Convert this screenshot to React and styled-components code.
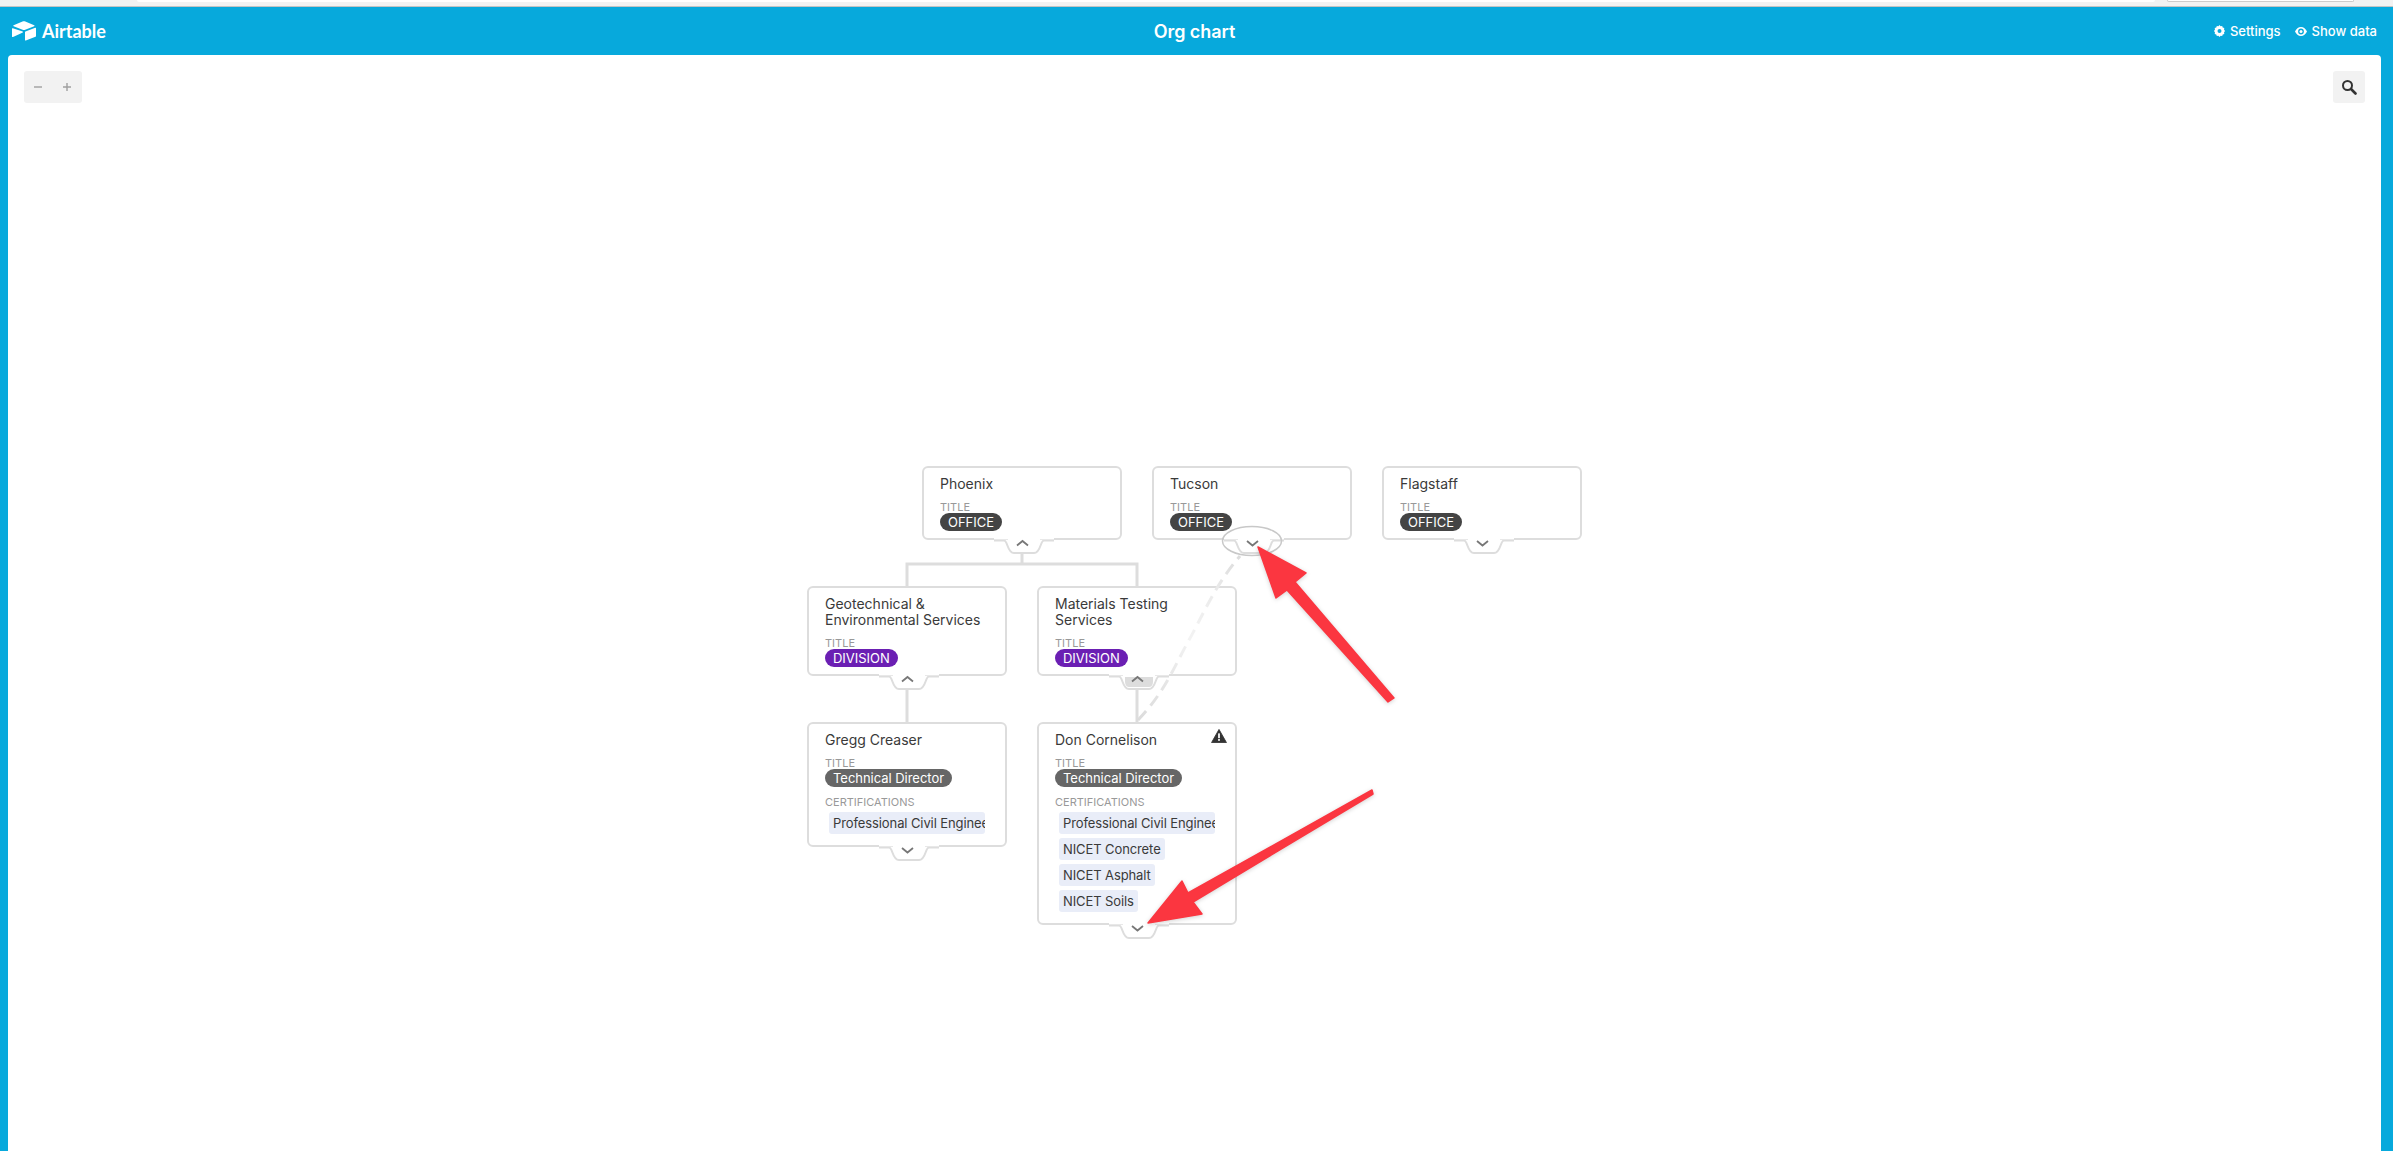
import React from "react";
import styled, { createGlobalStyle } from "styled-components";

const GlobalStyle = createGlobalStyle`
  html, body {
    margin: 0;
    padding: 0;
    height: 100%;
    background: #fff;
    font-family: Inter, "Liberation Sans", sans-serif;
    overflow: hidden;
  }
  #root { height: 100%; }
`;

const Page = styled.div`
  height: 1151px;
  display: flex;
  flex-direction: column;
  background: #07a9dc;
  overflow: hidden;
`;

const BrowserStrip = styled.div`
  flex: 0 0 7px;
  box-sizing: border-box;
  display: flex;
  background: #f2f2f2;
  border-bottom: 1px solid #c4c4c4;
`;

const StripTab = styled.div`
  margin-left: 137px;
  width: 2018px;
  height: 2px;
  background: #fff;
  border-radius: 0 0 4px 4px;
`;

const StripInput = styled.div`
  margin-left: 12px;
  width: 185px;
  height: 1px;
  background: #fff;
  border: 1px solid #ccc;
  border-top: 0;
  border-radius: 0 0 4px 4px;
`;

const Header = styled.header`
  flex: 0 0 48px;
  display: grid;
  grid-template-columns: 1fr auto 1fr;
  align-items: center;
  padding: 0 16px 0 12px;
  color: #fff;
`;

const Brand = styled.div`
  display: flex;
  align-items: center;
  gap: 6px;
  font-family: Lato, Inter, sans-serif;
  font-size: 18px;
  font-weight: 700;
`;

const HeaderTitle = styled.h1`
  margin: 0;
  font-size: 18px;
  font-weight: 600;
  letter-spacing: -0.05px;
`;

const HeaderActions = styled.div`
  display: flex;
  justify-content: flex-end;
  gap: 14px;
`;

const HeaderAction = styled.span`
  display: flex;
  align-items: center;
  gap: 5px;
  font-size: 13px;
  font-weight: 500;
`;

const Canvas = styled.main`
  position: relative;
  flex: 1;
  margin: 0 12px 0 8px;
  background: #fff;
  border-radius: 4px 4px 0 0;
`;

const ZoomControls = styled.div`
  position: absolute;
  left: 16px;
  top: 16px;
  width: 58px;
  height: 32px;
  display: flex;
  align-items: center;
  justify-content: space-around;
  padding-right: 1px;
  box-sizing: border-box;
  background: #f2f2f2;
  border-radius: 3px;
  color: #a0a0a0;
`;

const SearchButton = styled.div`
  position: absolute;
  right: 16px;
  top: 16px;
  width: 32px;
  height: 32px;
  display: flex;
  align-items: center;
  justify-content: center;
  background: #f2f2f2;
  border-radius: 3px;
`;

const Overlay = styled.svg`
  position: absolute;
  left: -8px;
  top: -55px;
  width: 2393px;
  height: 1151px;
  pointer-events: none;
  z-index: ${(p) => p.$z};
  overflow: visible;
`;

const NodeCard = styled.article`
  position: absolute;
  left: ${(p) => p.$x - 8}px;
  top: ${(p) => p.$y - 55}px;
  width: 200px;
  box-sizing: border-box;
  padding: 8px 18px 7px 16px;
  background: #fff;
  border: 2px solid #ddd;
  border-radius: 6px;
  z-index: 1;
`;

const NodeName = styled.div`
  font-size: 14px;
  line-height: 16px;
  color: #3a3a3a;
  white-space: pre-line;
`;

const FieldLabel = styled.div`
  margin-top: 9px;
  font-size: 11px;
  line-height: 12px;
  color: #999;
  text-transform: uppercase;
`;

const Pill = styled.div`
  width: fit-content;
  height: 18px;
  padding: 0 8px;
  border-radius: 9px;
  background: ${(p) => p.$color};
  color: #fff;
  font-size: 13px;
  line-height: 18px;
  letter-spacing: -0.03px;
  white-space: nowrap;
`;

const TagList = styled.div`
  margin-top: 4px;
  display: flex;
  flex-direction: column;
  align-items: flex-start;
  gap: 4px;
  padding: 0 0 4px 4px;
`;

const Tag = styled.span`
  max-width: 156px;
  box-sizing: border-box;
  height: 22px;
  padding: 0 4px;
  overflow: hidden;
  border-radius: 3px;
  background: #e9edf8;
  color: #3a3a3a;
  font-size: 13px;
  line-height: 22px;
  letter-spacing: -0.1px;
  white-space: nowrap;
`;

const Warning = styled.svg`
  position: absolute;
  right: 8px;
  top: 5px;
`;

const Toggle = styled.svg`
  position: absolute;
  left: 70px;
  bottom: -18px;
  z-index: 2;
`;

const Arrows = styled(Overlay)`
  filter: drop-shadow(0 1px 2px rgba(0, 0, 0, 0.18));
`;

const nodes = [
  { name: "Phoenix", x: 922, y: 466, title: "OFFICE", color: "#444444", dir: "up" },
  { name: "Tucson", x: 1152, y: 466, title: "OFFICE", color: "#444444", dir: "down" },
  { name: "Flagstaff", x: 1382, y: 466, title: "OFFICE", color: "#444444", dir: "down" },
  { name: "Geotechnical &\nEnvironmental Services", x: 807, y: 586, title: "DIVISION", color: "#6b1fb3", dir: "up" },
  { name: "Materials Testing\nServices", x: 1037, y: 586, title: "DIVISION", color: "#6b1fb3", dir: "up", active: true },
  {
    name: "Gregg Creaser",
    x: 807,
    y: 722,
    title: "Technical Director",
    color: "#666666",
    dir: "down",
    certs: ["Professional Civil Engineer"],
  },
  {
    name: "Don Cornelison",
    x: 1037,
    y: 722,
    title: "Technical Director",
    color: "#666666",
    dir: "down",
    warn: true,
    certs: ["Professional Civil Engineer", "NICET Concrete", "NICET Asphalt", "NICET Soils"],
  },
];

function ToggleTab({ dir, active }) {
  return (
    <Toggle width="60" height="18" viewBox="0 0 60 18" fill="none">
      <path d="M0 2.5H10C14 2.5 13 15 20 15H40C47 15 46 2.5 50 2.5H60" fill="#fff" stroke="#ddd" strokeWidth="2" />
      <rect x="0" y="0" width="60" height="2" fill="#fff" />
      <path d="M0 1.5H14M46 1.5H60" stroke="#e8e8e8" strokeWidth="1" />
      {active && <path d="M16 3H44V8C44 11 42 13 40 13H20C18 13 16 11 16 8Z" fill="#ddd" />}
      <path
        d={dir === "up" ? "M23 7.5L28.5 3L34 7.5" : "M23 3L28.5 7.5L34 3"}
        stroke="#777"
        strokeWidth="1.8"
        fill="none"
      />
    </Toggle>
  );
}

function Node({ node }) {
  return (
    <NodeCard $x={node.x} $y={node.y}>
      <NodeName>{node.name}</NodeName>
      {node.warn && (
        <Warning width="16" height="14" viewBox="0 0 18 16">
          <path d="M9 0.5L17.5 15.5H0.5Z" fill="#333" stroke="#333" strokeLinejoin="round" />
          <rect x="8" y="5" width="2" height="5.5" fill="#fff" />
          <rect x="8" y="11.5" width="2" height="2" fill="#fff" />
        </Warning>
      )}
      <FieldLabel>Title</FieldLabel>
      <Pill $color={node.color}>{node.title}</Pill>
      {node.certs && (
        <>
          <FieldLabel>Certifications</FieldLabel>
          <TagList>
            {node.certs.map((c) => (
              <Tag key={c}>{c}</Tag>
            ))}
          </TagList>
        </>
      )}
      <ToggleTab dir={node.dir} active={node.active} />
    </NodeCard>
  );
}

export default function App() {
  return (
    <Page>
      <GlobalStyle />
      <BrowserStrip>
        <StripTab />
        <StripInput />
      </BrowserStrip>
      <Header>
        <Brand>
          <svg width="24" height="20" viewBox="0 0 24 20">
            <path d="M10.5 0.6L1.6 4.2C1.1 4.4 1.1 5 1.6 5.2L10.6 8.7C11.4 9 12.4 9 13.2 8.7L22.2 5.2C22.7 5 22.7 4.4 22.2 4.2L13.3 0.6C12.4 0.2 11.4 0.2 10.5 0.6Z" fill="#fff" />
            <path d="M13 11V19C13 19.4 13.4 19.7 13.8 19.5L23.5 15.8C23.8 15.7 24 15.4 24 15.1V7.2C24 6.8 23.6 6.5 23.2 6.7L13.5 10.4C13.2 10.5 13 10.7 13 11Z" fill="#fff" />
            <path d="M10.8 11.4L7.6 13L1 16C0.5 16.2 0 15.9 0 15.4V7.6C0 7.3 0.4 7 0.8 7.2L10.7 10.6C11.1 10.8 11.1 11.2 10.8 11.4Z" fill="#fff" />
          </svg>
          Airtable
        </Brand>
        <HeaderTitle>Org chart</HeaderTitle>
        <HeaderActions>
          <HeaderAction>
            <svg width="11" height="12" viewBox="0 0 11 12">
              <path fillRule="evenodd" d="M5.5 0L6.6 1.2L8.2 0.9L8.7 2.5L10.3 3L10 4.6L11 6L10 7.4L10.3 9L8.7 9.5L8.2 11.1L6.6 10.8L5.5 12L4.4 10.8L2.8 11.1L2.3 9.5L0.7 9L1 7.4L0 6L1 4.6L0.7 3L2.3 2.5L2.8 0.9L4.4 1.2ZM5.5 4A2 2 0 1 0 5.5 8A2 2 0 1 0 5.5 4Z" fill="#fff" />
            </svg>
            Settings
          </HeaderAction>
          <HeaderAction>
            <svg width="12" height="9" viewBox="0 0 12 9">
              <path fillRule="evenodd" d="M6 0C3.4 0 1.2 1.8 0 4.5C1.2 7.2 3.4 9 6 9C8.6 9 10.8 7.2 12 4.5C10.8 1.8 8.6 0 6 0ZM6 1.6A2.9 2.9 0 1 1 6 7.4A2.9 2.9 0 1 1 6 1.6Z" fill="#fff" />
              <circle cx="6" cy="4.5" r="1.5" fill="#fff" />
            </svg>
            Show data
          </HeaderAction>
        </HeaderActions>
      </Header>
      <Canvas>
        <ZoomControls>
          <svg width="10" height="10" viewBox="0 0 10 10"><path d="M1 5H9" stroke="currentColor" strokeWidth="1.4" /></svg>
          <svg width="10" height="10" viewBox="0 0 10 10"><path d="M1 5H9M5 1V9" stroke="currentColor" strokeWidth="1.4" /></svg>
        </ZoomControls>
        <SearchButton>
          <svg width="16" height="16" viewBox="0 0 16 16" fill="none">
            <circle cx="6.5" cy="6.5" r="4.5" stroke="#333" strokeWidth="2" />
            <path d="M10 10L14.5 14.5" stroke="#333" strokeWidth="2.6" strokeLinecap="round" />
          </svg>
        </SearchButton>

        <Overlay $z={0} viewBox="0 0 2393 1151" fill="none">
          <path d="M1022 550V564M907 586V564H1137V586M907 685V722M1137 685V722" stroke="#ddd" strokeWidth="3" />
        </Overlay>

        {nodes.map((n) => (
          <Node key={n.name} node={n} />
        ))}

        <Overlay $z={3} viewBox="0 0 2393 1151" fill="none">
          <defs>
            <linearGradient id="dashFade" x1="1138" y1="720" x2="1240" y2="556" gradientUnits="userSpaceOnUse">
              <stop offset="0" stopColor="#dcdcdc" />
              <stop offset="0.25" stopColor="#e6e6e6" />
              <stop offset="0.5" stopColor="#f3f3f3" />
              <stop offset="0.75" stopColor="#ececec" />
              <stop offset="1" stopColor="#dcdcdc" />
            </linearGradient>
          </defs>
          <path
            d="M1138 720C1165 692 1175 665 1189 640S1215 585 1240 556"
            stroke="url(#dashFade)"
            strokeWidth="3"
            strokeDasharray="12 7"
          />
          <ellipse cx="1252" cy="541" rx="29.5" ry="14.5" stroke="#c8c8c8" strokeWidth="1.5" />
        </Overlay>

        <Arrows $z={4} viewBox="0 0 2393 1151" fill="#fb3640">
          <path d="M1258 547L1306 573L1295 582L1394 698L1388 702L1287 590L1276 598Z" stroke="#fb3640" strokeWidth="1.5" strokeLinejoin="round" />
          <path d="M1148 923L1182 881L1188 893L1372 790L1373 794L1193 902L1202 914Z" stroke="#fb3640" strokeWidth="1.5" strokeLinejoin="round" />
        </Arrows>
      </Canvas>
    </Page>
  );
}
